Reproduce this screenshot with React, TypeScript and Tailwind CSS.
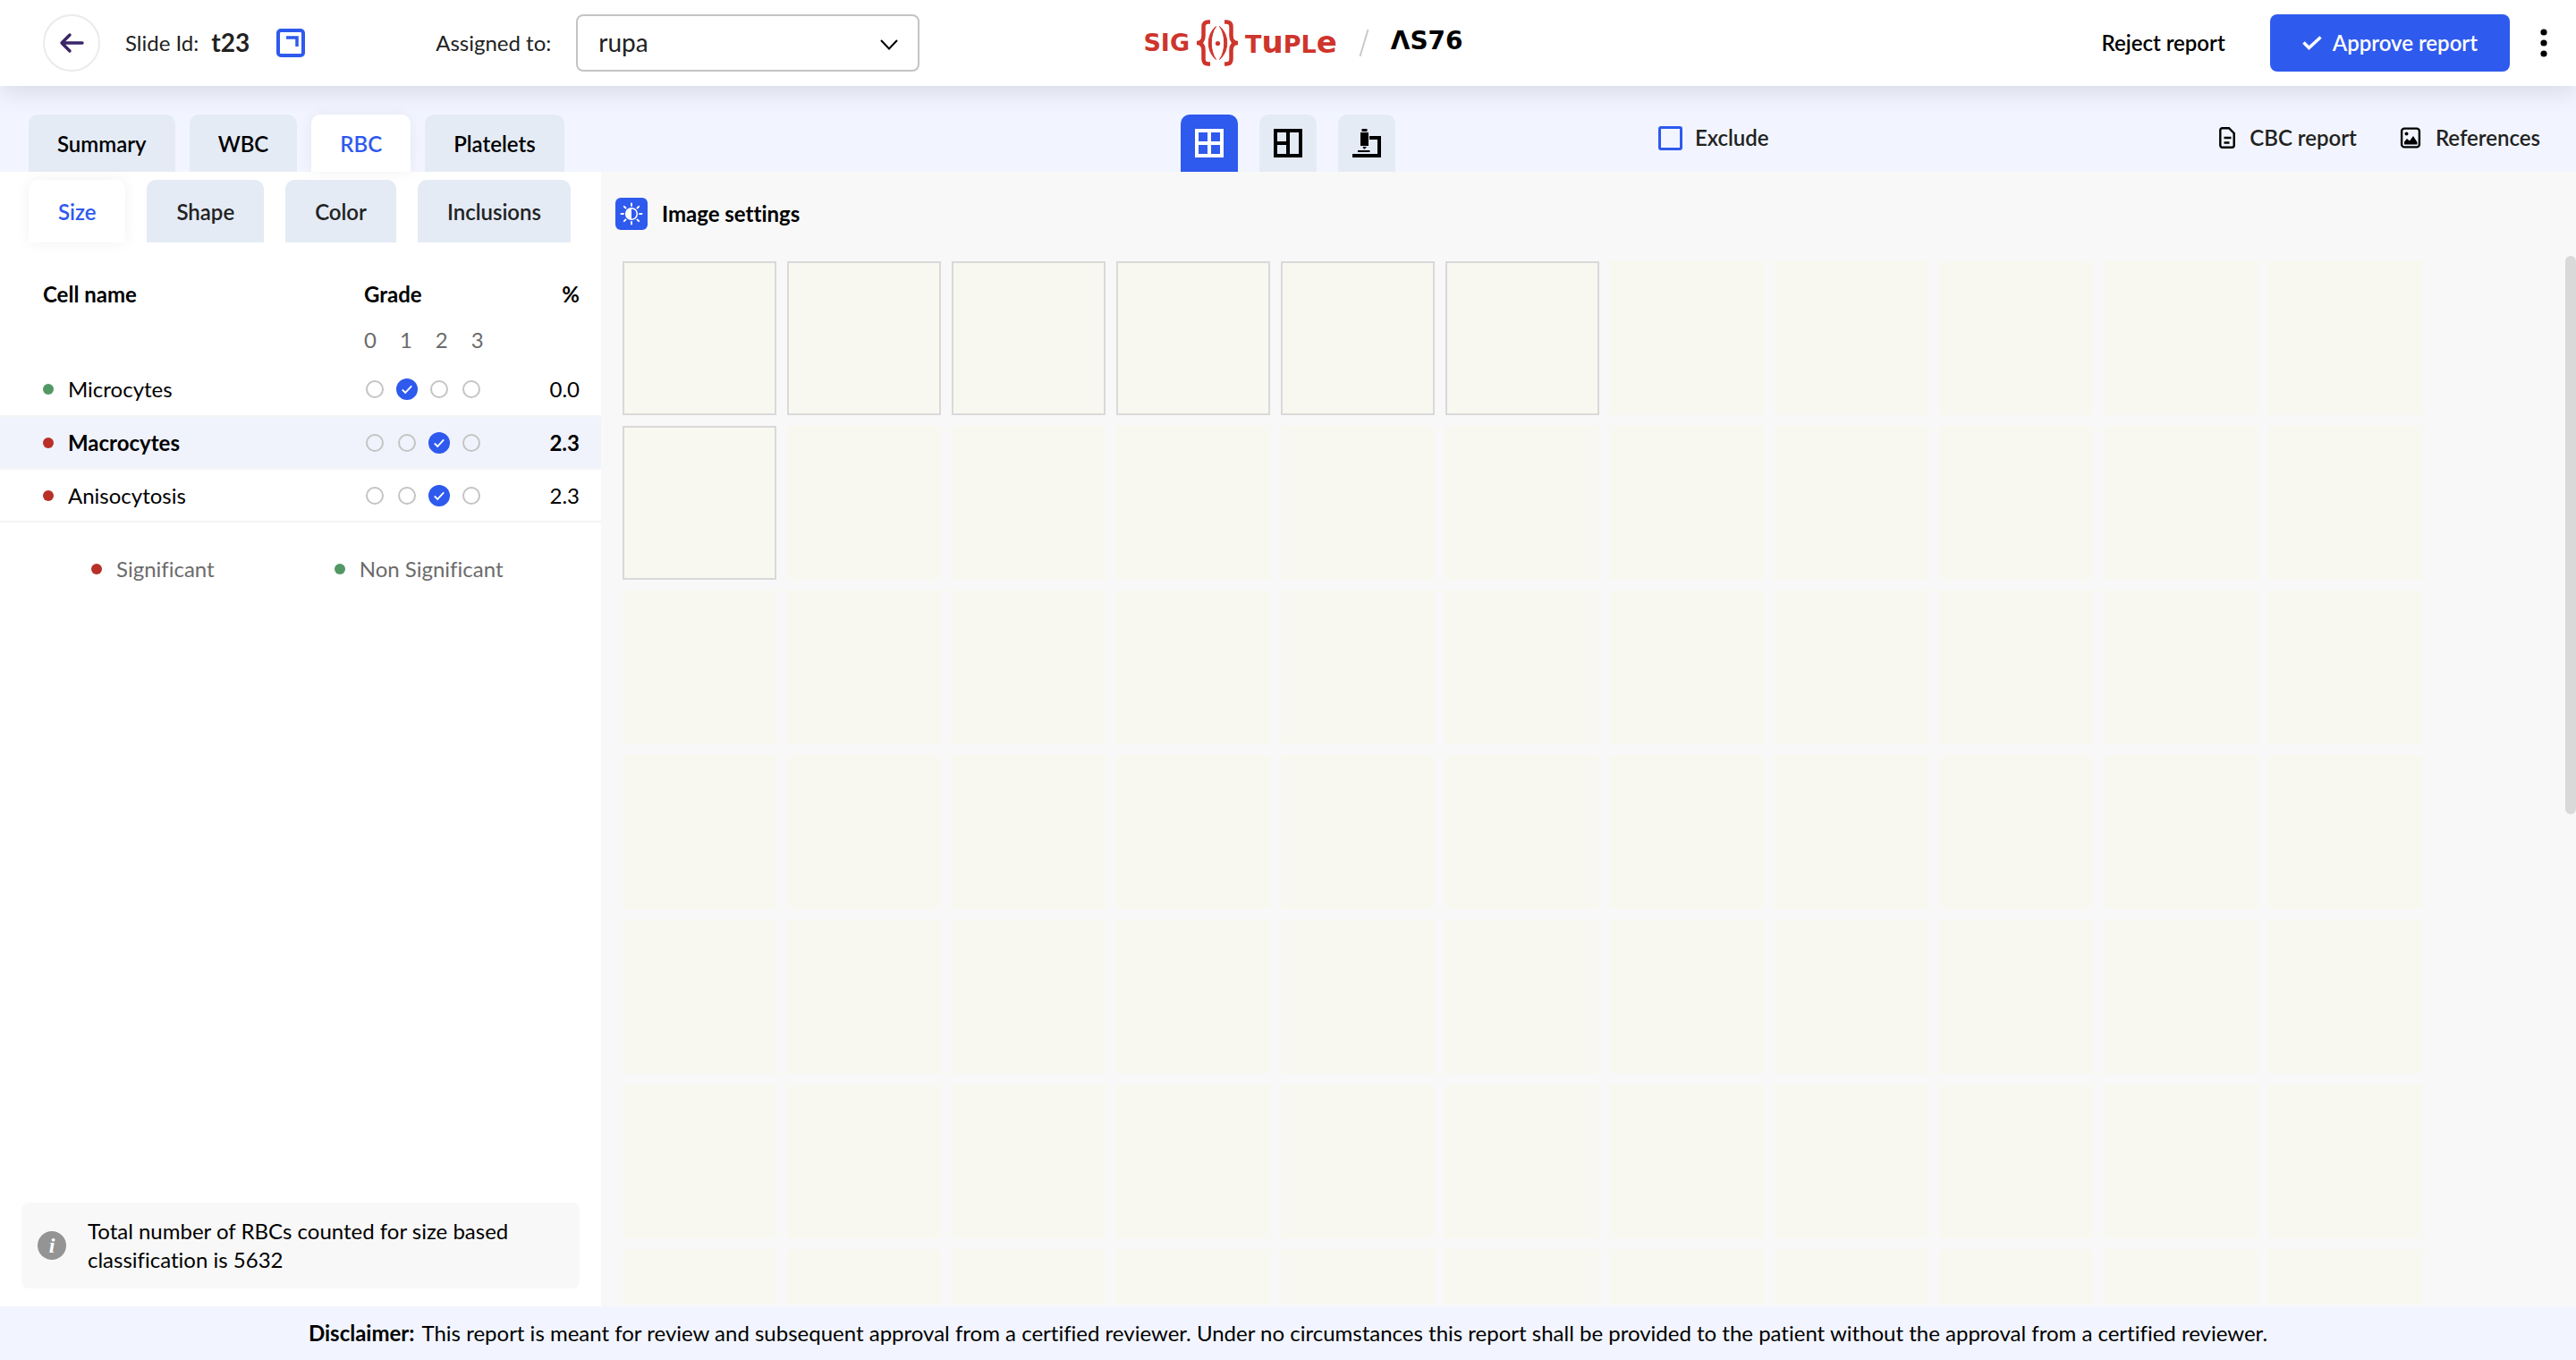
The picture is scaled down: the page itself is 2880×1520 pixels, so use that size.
import React, { useState } from "react";

const tabShape = "flex items-center rounded-t-[10px] pt-0.5 text-2xl font-semibold";

function BrandLogo() {
  return (
    <div className="ml-2 flex items-center font-['DejaVu_Sans',sans-serif] font-bold" aria-label="SigTuple AS76">
      <div className="flex items-center gap-2 text-[#ce352c]">
        <span className="text-[27px] leading-8">SIG</span>
        <svg className="h-[52px] w-[46px]" viewBox="0 0 46 52" fill="none" stroke="currentColor">
          <path d="M15 2.5H13C9 2.5 7.500 4.500 7.500 8V18C7.500 22.500 5.500 26 0 26C5.500 26 7.500 29.500 7.500 34V44C7.500 47.500 9 49.500 13 49.500H15" strokeWidth="4.500" />
          <path d="M31 2.500H33C37 2.500 38.500 4.500 38.500 8V18C38.500 22.500 40.500 26 46 26C40.500 26 38.500 29.500 38.500 34V44C38.500 47.500 37 49.500 33 49.500H31" strokeWidth="4.500" />
          <path d="M21.500 7.500C10.500 17 10.500 35 21.500 44.500C14.500 35 14.500 17 21.500 7.500Z" fill="currentColor" strokeWidth="1" />
          <path d="M25.500 7.500C36.500 17 36.500 35 25.500 44.500C32.500 35 32.500 17 25.500 7.500Z" fill="currentColor" strokeWidth="1" />
          <circle cx="23.500" cy="26.500" r="2.600" fill="currentColor" stroke="none" />
        </svg>
        <span className="text-[27px] leading-8">
          T<span className="text-[34px]">u</span>PL<span className="text-[34px]">e</span>
        </span>
      </div>
      <svg className="mx-6 h-8 w-3" viewBox="0 0 12 32" stroke="#c9c9c9" strokeWidth="2">
        <path d="M10.500 1L1.500 31" />
      </svg>
      <span className="pb-1 text-[28px] leading-8 text-black">ΛS76</span>
    </div>
  );
}

function MicroscopeIcon() {
  return (
    <svg className="size-8" viewBox="0 0 32 32" fill="#000">
      <path d="M10.500 0h6v3h-6zM9 4h9v15H9zM11.500 20h4.500l-1.200 1.500h-0.600V22.500h-1.600V21.500H12zM19 8h13v24H0v-4h28V12h-9zM6 24h13.500v2H6z" />
    </svg>
  );
}

function GridIcon() {
  return (
    <svg className="size-8" viewBox="0 0 32 32" fill="none" stroke="currentColor" strokeWidth="4">
      <path d="M2 2h28v28H2zM16 2v28M2 16h28" />
    </svg>
  );
}

function SplitIcon() {
  return (
    <svg className="size-8" viewBox="0 0 32 32" fill="none" stroke="currentColor" strokeWidth="4">
      <path d="M2 2h28v28H2zM16 2v28M2 16h14" />
    </svg>
  );
}

function BrightnessIcon() {
  return (
    <svg className="size-9" viewBox="0 0 36 36" fill="none" stroke="#fff">
      <rect width="36" height="36" rx="6" fill="#2f5aee" stroke="none" />
      <circle cx="18" cy="18" r="6.300" strokeWidth="1.600" />
      <path d="M18 11.700a6.300 6.300 0 0 0 0 12.600z" fill="#fff" stroke="none" />
      <path
        d="M18 6.500v2.500M18 27v2.500M6.500 18H9M27 18h2.500M9.800 9.800l1.800 1.800M24.400 24.400l1.800 1.800M9.800 26.200l1.800-1.800M24.400 11.600l1.800-1.800"
        strokeWidth="1.900"
        strokeLinecap="round"
      />
    </svg>
  );
}

function ReportIcon() {
  return (
    <svg className="h-6 w-[18px]" viewBox="0 0 18 24" fill="none" stroke="#000" strokeWidth="2.400">
      <path d="M11 1.200H3.500a2.200 2.200 0 0 0-2.200 2.200v17.200a2.200 2.200 0 0 0 2.200 2.200h11a2.200 2.200 0 0 0 2.200-2.200V7z" />
      <path d="M5.500 12h8M5.500 17.500h6" />
    </svg>
  );
}

function PictureIcon() {
  return (
    <svg className="size-6" viewBox="0 0 24 24" fill="none">
      <rect x="2.100" y="1.600" width="19.800" height="20.800" rx="3" stroke="#000" strokeWidth="2.400" />
      <circle cx="7.500" cy="7.500" r="2" fill="#000" />
      <path d="M5 19.500v-3l3-3.500 3 2.500 4-5.500 4.500 7v2.500z" fill="#000" />
    </svg>
  );
}

const mainTabs = ["Summary", "WBC", "RBC", "Platelets"];
const subTabs = ["Size", "Shape", "Color", "Inclusions"];
const views = [
  { name: "Grid view", icon: <GridIcon /> },
  { name: "Split view", icon: <SplitIcon /> },
  { name: "Microscope view", icon: <MicroscopeIcon /> },
];
const cells = [
  { name: "Microcytes", pct: "0.0", significant: false },
  { name: "Macrocytes", pct: "2.3", significant: true },
  { name: "Anisocytosis", pct: "2.3", significant: true },
];
const patches = Array.from({ length: 154 }, (_, i) => i);

function Dot({ significant }: { significant: boolean }) {
  return <span className={`size-3 shrink-0 rounded-full ${significant ? "bg-[#b83028]" : "bg-[#529864]"}`} />;
}

function GradeRadio({ cell, grade, checked, onChange }: { cell: string; grade: number; checked: boolean; onChange: () => void }) {
  return (
    <label className="grid size-6 place-items-center">
      <input
        type="radio"
        name={cell}
        aria-label={`${cell} grade ${grade}`}
        checked={checked}
        onChange={onChange}
        className="peer col-start-1 row-start-1 size-5 appearance-none rounded-full border-2 border-[#c4c4c4] checked:size-6 checked:border-[#2f5aee] checked:bg-[#2f5aee]"
      />
      <svg className="pointer-events-none col-start-1 row-start-1 hidden size-6 peer-checked:block" viewBox="0 0 24 24" fill="none" stroke="#fff" strokeWidth="1.800">
        <path d="M6.800 12.500l3.400 3.400 7-7.500" />
      </svg>
    </label>
  );
}

export default function App() {
  const [tab, setTab] = useState("RBC");
  const [sub, setSub] = useState("Size");
  const [view, setView] = useState("Grid view");
  const [active, setActive] = useState("Macrocytes");
  const [exclude, setExclude] = useState(false);
  const [grades, setGrades] = useState<Record<string, number>>({ Microcytes: 1, Macrocytes: 2, Anisocytosis: 2 });

  return (
    <div className="flex h-screen flex-col overflow-hidden bg-white font-['Lato',sans-serif] text-2xl text-black [font-variant-ligatures:none]">
      <header className="z-10 grid h-24 shrink-0 grid-cols-[1fr_auto_1fr] items-center bg-white pl-12 pr-[22px] shadow-[0_8px_24px_rgba(0,0,0,0.1)]">
        <div className="flex items-center">
          <button aria-label="Back" className="grid size-16 place-items-center rounded-full border-2 border-[#ebebeb]">
            <svg className="h-6 w-7" viewBox="0 0 28 24" fill="none" stroke="#3a2566" strokeWidth="3.400" strokeLinecap="round" strokeLinejoin="round">
              <path d="M26 12H3M12 3L3 12l9 9" />
            </svg>
          </button>
          <p className="ml-7 flex items-center gap-[14px] text-[#222]">
            Slide Id: <strong className="text-[28px] font-bold">t23</strong>
          </p>
          <button aria-label="Slide overview" className="ml-[30px]">
            <svg className="size-8" viewBox="0 0 32 32" fill="none" stroke="#2f5aee" strokeWidth="4">
              <rect x="2" y="2" width="28" height="28" rx="3" />
              <path d="M11 10h12v10" strokeWidth="3.500" />
            </svg>
          </button>
          <label htmlFor="assignee" className="ml-[146px] text-[#222]">
            Assigned to:
          </label>
          <div className="relative ml-7 w-96">
            <select id="assignee" defaultValue="rupa" className="h-16 w-full appearance-none rounded-lg border-2 border-[#c4c4c4] bg-white px-[23px] text-[28px] text-[#222]">
              <option>rupa</option>
            </select>
            <svg className="pointer-events-none absolute right-6 top-7 h-3 w-5" viewBox="0 0 20 12" fill="none" stroke="#000" strokeWidth="2">
              <path d="M1 1l9 9.500L19 1" />
            </svg>
          </div>
        </div>
        <BrandLogo />
        <div className="flex items-center justify-end font-semibold">
          <button className="mr-[50px]">Reject report</button>
          <button className="mr-6 flex h-16 items-center gap-3 rounded-lg bg-[#2f5aee] px-9 text-white">
            <svg className="h-4 w-[22px]" viewBox="0 0 22 16" fill="none" stroke="#fff" strokeWidth="3.500">
              <path d="M1.500 7.500l6 6L20.500 1.500" />
            </svg>
            Approve report
          </button>
          <button aria-label="More options" className="grid h-10 w-7 place-items-center">
            <svg className="h-8 w-2" viewBox="0 0 8 32">
              <circle cx="4" cy="4" r="3.600" />
              <circle cx="4" cy="16" r="3.600" />
              <circle cx="4" cy="28" r="3.600" />
            </svg>
          </button>
        </div>
      </header>

      <nav className="grid h-24 shrink-0 grid-cols-[1fr_auto_1fr] items-end bg-[#f2f5ff] px-8">
        <div className="flex gap-4">
          {mainTabs.map((t) => (
            <button
              key={t}
              onClick={() => setTab(t)}
              className={`${tabShape} h-16 px-8 ${t === tab ? "bg-white text-[#2f5aee] shadow-[0_0_16px_rgba(0,0,0,0.06)]" : "bg-[#e4ebf5]"}`}
            >
              {t}
            </button>
          ))}
        </div>
        <div className="flex gap-6">
          {views.map((v) => (
            <button
              key={v.name}
              aria-label={v.name}
              onClick={() => setView(v.name)}
              className={`grid size-16 place-items-center rounded-t-[10px] ${v.name === view ? "bg-[#2f5aee] text-white" : "bg-[#e4ebf5] text-black"}`}
            >
              {v.icon}
            </button>
          ))}
        </div>
        <div className="flex h-16 items-center justify-between pb-3 font-semibold text-[#222]">
          <label className="ml-[294px] flex items-center gap-[14px]">
            <input
              type="checkbox"
              checked={exclude}
              onChange={(e) => setExclude(e.target.checked)}
              className="size-[27px] appearance-none rounded-[3px] border-[3px] border-[#2f5aee] checked:bg-[#2f5aee]"
            />
            Exclude
          </label>
          <div className="flex items-center gap-12 pr-2">
            <button className="flex items-center gap-4">
              <ReportIcon />
              CBC report
            </button>
            <button className="flex items-center gap-4">
              <PictureIcon />
              References
            </button>
          </div>
        </div>
      </nav>

      <main className="flex min-h-0 flex-1">
        <aside className="flex w-[672px] shrink-0 flex-col">
          <div className="flex gap-6 px-8 pt-[9px]">
            {subTabs.map((t) => (
              <button
                key={t}
                onClick={() => setSub(t)}
                className={`${tabShape} h-[70px] px-[33px] ${t === sub ? "bg-white text-[#2f5aee] shadow-[0_0_16px_rgba(0,0,0,0.06)]" : "bg-[#e4ebf5] text-[#222]"}`}
              >
                {t}
              </button>
            ))}
          </div>
          <table className="mt-7 w-full table-fixed border-collapse text-left">
            <colgroup>
              <col />
              <col className="w-[165px]" />
              <col className="w-[100px]" />
            </colgroup>
            <thead>
              <tr className="h-[60px]">
                <th className="pl-12 font-bold">Cell name</th>
                <th className="font-bold">Grade</th>
                <th className="pr-6 text-right font-bold">%</th>
              </tr>
              <tr className="h-[47px] text-[#6b6b6b]">
                <td />
                <td className="pb-1.5">
                  <div className="flex gap-[26px]">
                    {[0, 1, 2, 3].map((g) => (
                      <span key={g}>{g}</span>
                    ))}
                  </div>
                </td>
                <td />
              </tr>
            </thead>
            <tbody>
              {cells.map((c) => (
                <tr
                  key={c.name}
                  onClick={() => setActive(c.name)}
                  className={`h-[59px] border-b-2 border-[#f4f4f6] ${c.name === active ? "bg-[#f0f3fc] font-bold" : ""}`}
                >
                  <td>
                    <div className="flex items-center gap-4 pl-12">
                      <Dot significant={c.significant} />
                      {c.name}
                    </div>
                  </td>
                  <td>
                    <div className="flex gap-3">
                      {[0, 1, 2, 3].map((g) => (
                        <GradeRadio
                          key={g}
                          cell={c.name}
                          grade={g}
                          checked={grades[c.name] === g}
                          onChange={() => setGrades({ ...grades, [c.name]: g })}
                        />
                      ))}
                    </div>
                  </td>
                  <td className="pr-6 text-right">{c.pct}</td>
                </tr>
              ))}
            </tbody>
          </table>
          <div className="mt-9 flex items-center gap-[134px] pl-[102px] text-[#6b6b6b]">
            <span className="flex items-center gap-4">
              <Dot significant />
              Significant
            </span>
            <span className="flex items-center gap-4">
              <Dot significant={false} />
              Non Significant
            </span>
          </div>
          <div className="mx-6 mb-5 mt-auto flex items-center gap-6 rounded-lg bg-[#f8f8f8] px-[18px] py-4">
            <span className="grid size-8 shrink-0 place-items-center rounded-full bg-[#949494] font-['Liberation_Serif',serif] text-2xl font-bold italic leading-8 text-white">
              i
            </span>
            <p className="leading-8">Total number of RBCs counted for size based classification is 5632</p>
          </div>
        </aside>

        <section className="relative flex min-w-0 flex-1 flex-col bg-[#f8f8f8]">
          <div className="flex h-[100px] shrink-0 items-center pb-1.5 pl-4">
            <button className="flex items-center gap-4 font-bold">
              <BrightnessIcon />
              Image settings
            </button>
          </div>
          <div className="mb-[2px] grid min-h-0 flex-1 grid-cols-[repeat(auto-fill,172px)] content-start gap-3 overflow-hidden pl-6 pr-3">
            {patches.map((i) => (
              <div key={i} className={`h-[172px] bg-[#f8f8f0] ${i < 6 || i === 11 ? "border-2 border-[#d9d9d9]" : ""}`} />
            ))}
          </div>
          <div className="absolute right-0 top-[94px] h-[624px] w-3 rounded-md bg-[#d9d9d9]" />
        </section>
      </main>

      <footer className="flex h-[60px] shrink-0 items-center justify-center gap-2 bg-[#f2f5ff]">
        <strong>Disclaimer:</strong>
        <p>
          This report is meant for review and subsequent approval from a certified reviewer. Under no circumstances this report shall be provided to the patient
          without the approval from a certified reviewer.
        </p>
      </footer>
    </div>
  );
}
